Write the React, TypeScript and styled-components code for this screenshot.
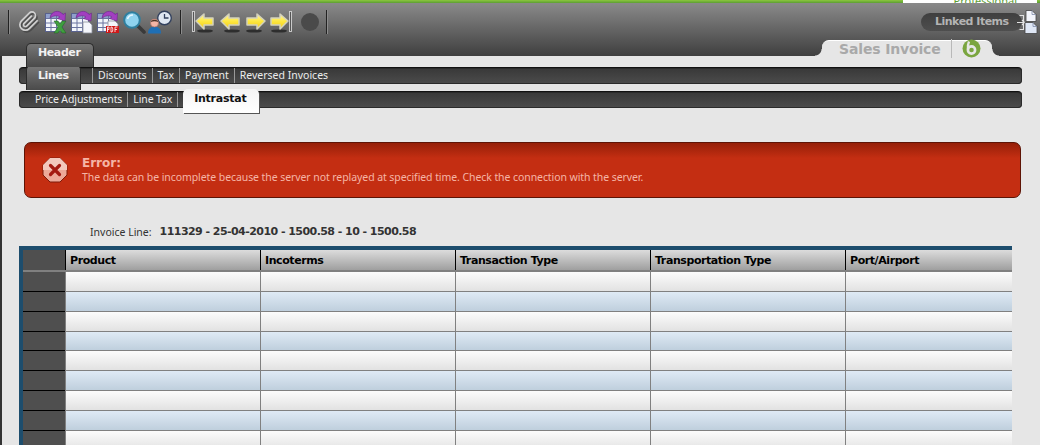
import * as React from 'react';
import styled, { createGlobalStyle } from 'styled-components';

const GlobalStyle = createGlobalStyle`
  html, body {
    margin: 0;
    height: 445px;
    overflow: hidden;
    background: #e6e6e6;
    font-family: "Noto Sans", "DejaVu Sans", sans-serif;
    font-size: 10.5px;
  }
`;

const BOLD = `"DejaVu Sans", Verdana, sans-serif`;

const Page = styled.div`
  width: 1040px;
  height: 445px;
  overflow: hidden;
  display: flex;
  flex-direction: column;
`;

const TopStrip = styled.div`
  height: 3px;
  flex: none;
  display: flex;
  justify-content: flex-end;
  background: linear-gradient(#8cc63f, #5c9e33);
`;

const Edition = styled.div`
  width: 134px;
  margin-right: 3px;
  background: #fff;
  color: #5c9e33;
  text-align: right;
  padding-right: 20px;
  box-sizing: border-box;
  line-height: 1px;
  font-size: 11px;
  overflow: hidden;
`;

const Toolbar = styled.div`
  height: 53px;
  flex: none;
  display: flex;
  flex-direction: column;
  justify-content: space-between;
  background: linear-gradient(#8a8a8a, #3f3f3f);
`;

const ToolRow = styled.div`
  display: flex;
  align-items: flex-start;
  justify-content: space-between;
  padding-top: 7px;
`;

const ToolGroup = styled.div`
  display: flex;
  align-items: center;
  height: 24px;
  padding-left: 8px;
`;

const ToolSep = styled.span<{ $l: number; $r: number }>`
  width: 1px;
  height: 24px;
  background: #222;
  box-shadow: 1px 0 0 #8d8d8d;
  margin: 0 ${(p) => p.$r}px 0 ${(p) => p.$l}px;
`;

const IconSlot = styled.span<{ $w: number; $gap?: number }>`
  display: flex;
  width: ${(p) => p.$w}px;
  height: 24px;
  margin-right: ${(p) => p.$gap ?? 3}px;
  svg {
    display: block;
  }
`;

const RecordDot = styled.span`
  width: 18px;
  height: 18px;
  border-radius: 50%;
  background: #4a4a4a;
  margin: 0 7px 0 9px;
`;

const LinkedWrap = styled.div`
  display: flex;
  align-items: center;
  margin-right: 2px;
`;

const LinkedPill = styled.div`
  width: 101px;
  height: 18px;
  margin-right: -6px;
  padding-left: 14px;
  box-sizing: border-box;
  border-radius: 9px;
  background: linear-gradient(#3f3f3f, #4e4e4e);
  color: #b4b4b4;
  font: bold 11px/18px ${BOLD};
  letter-spacing: -0.5px;
`;

const TitleRow = styled.div`
  display: flex;
  align-items: flex-end;
  justify-content: space-between;
  height: 16px;
  padding: 0 48px 0 26px;
`;

const HeaderTab = styled.div`
  position: relative;
  z-index: 1;
  width: 68px;
  height: 24px;
  margin-bottom: -11px;
  padding-left: 11px;
  box-sizing: border-box;
  border: 1px solid #2c2c2c;
  border-bottom: 0;
  border-radius: 5px 5px 0 0;
  background: linear-gradient(#777, #4a4a4a);
  color: #f2f2f2;
  font: bold 11px/17px ${BOLD};
  letter-spacing: -0.4px;
`;

const DocTab = styled.div`
  position: relative;
  width: 170px;
  height: 16px;
  display: flex;
  align-items: center;
  box-sizing: border-box;
  padding-left: 17px;
  background: #e6e6e6;
  border-top: 1px solid #fff;
  border-radius: 7px 7px 0 0;
  color: #a9a9a9;
  font: bold 14px/16px ${BOLD};
  letter-spacing: -0.15px;
  white-space: nowrap;
  &::before,
  &::after {
    content: '';
    position: absolute;
    bottom: 0;
    width: 7px;
    height: 7px;
  }
  &::before {
    left: -7px;
    background: radial-gradient(circle at 0 0, transparent 6px, #e6e6e6 7px);
  }
  &::after {
    right: -7px;
    background: radial-gradient(circle at 100% 0, transparent 6px, #e6e6e6 7px);
  }
`;

const DocDivider = styled.span`
  width: 1px;
  height: 19px;
  margin: 0 10px;
  flex: none;
  background: #b9b9b9;
`;

const Content = styled.div`
  flex: 1;
  min-height: 0;
  border-left: 2px solid #333;
  padding: 11px 18px 0 17px;
`;

const SubBar = styled.div<{ $mb: number; $track: number }>`
  height: 17px;
  margin-bottom: ${(p) => p.$mb}px;
  display: flex;
  align-items: flex-start;
  box-sizing: border-box;
  border-top: 1px solid #111;
  border-radius: 4px;
  background: linear-gradient(#383838, #4c4c4c);
  color: #ececec;
  letter-spacing: ${(p) => p.$track}px;
  box-shadow: inset 0 0 0 1px #2b2b2b;
`;

const BarItem = styled.span<{ $sep?: boolean; $lead?: boolean }>`
  height: 15px;
  line-height: 14px;
  padding: 0 5px;
  white-space: nowrap;
  border-right: ${(p) => (p.$sep === false ? 0 : '1px solid #999')};
  border-left: ${(p) => (p.$lead ? '1px solid #999' : 0)};
`;

const LinesTab = styled.div`
  width: 55px;
  height: 25px;
  margin: -3px 11px 0 7px;
  padding-left: 11px;
  flex: none;
  box-sizing: border-box;
  border: 1px solid #2c2c2c;
  border-bottom: 0;
  border-radius: 5px 5px 0 0;
  background: linear-gradient(#777, #4a4a4a);
  color: #f2f2f2;
  font: bold 11px/19px ${BOLD};
  letter-spacing: -0.4px;
`;

const ActiveTab = styled.div`
  width: 76px;
  height: 24px;
  margin: -3px 0 0 5px;
  flex: none;
  box-sizing: border-box;
  padding-left: 11px;
  border-radius: 5px 5px 0 0;
  background: linear-gradient(#f4f4f4, #fff);
  box-shadow: 1px 1px 0 #555;
  color: #111;
  font: bold 11px/20px ${BOLD};
  letter-spacing: -0.25px;
`;

const BarIndent = styled.span<{ $w: number }>`
  width: ${(p) => p.$w}px;
  flex: none;
`;

const ErrorBox = styled.div`
  height: 56px;
  margin: 34px 1px 0 5px;
  display: flex;
  align-items: center;
  box-sizing: border-box;
  padding-left: 17px;
  border: 1px solid #5e1406;
  border-radius: 7px;
  background: linear-gradient(#951f08, #c42e12 28%, #c42e12);
`;

const ErrorText = styled.div`
  margin-left: 14px;
  color: #f5b5a6;
`;

const ErrorTitle = styled.div`
  font: bold 12px/14px ${BOLD};
`;

const ErrorMessage = styled.div`
  line-height: 14px;
  letter-spacing: -0.08px;
`;

const InvoiceLine = styled.div`
  margin: 27px 0 0 71px;
  height: 14px;
  display: flex;
  color: #333;
  line-height: 14px;
`;

const InvoiceValue = styled.span`
  margin-left: 8px;
  font: bold 11px/14px ${BOLD};
  letter-spacing: -0.55px;
`;

const Grid = styled.div`
  width: 993px;
  margin-top: 7px;
  box-sizing: border-box;
  border-top: 4px solid #1d4d6d;
  border-left: 4px solid #1d4d6d;
`;

const HeadRow = styled.div`
  display: flex;
  height: 22px;
  box-sizing: border-box;
  border-bottom: 2px solid;
  border-image: linear-gradient(#000 50%, #808080 50%) 1;
`;

const Corner = styled.div`
  width: 42px;
  flex: none;
  background: #4f4f4f;
`;

const HeadCell = styled.div`
  width: 195px;
  flex: none;
  box-sizing: border-box;
  padding-left: 4px;
  border-left: 1px solid #000;
  background: linear-gradient(#dcdcdc, #9f9f9f);
  color: #000;
  font: bold 11px/22px ${BOLD};
  letter-spacing: -0.42px;
  &:last-child {
    width: 167px;
  }
`;

const Row = styled.div<{ $h: number }>`
  display: flex;
  height: ${(p) => p.$h}px;
`;

const RowHead = styled.div`
  width: 42px;
  flex: none;
  box-sizing: border-box;
  background: #4f4f4f;
  border-bottom: 1px solid #000;
`;

const Cell = styled.div<{ $alt: boolean }>`
  width: 195px;
  flex: none;
  box-sizing: border-box;
  border-left: 1px solid #808080;
  border-bottom: 1px solid #808080;
  background: ${(p) =>
    p.$alt ? 'linear-gradient(#dfeaf5, #bfcfdd)' : 'linear-gradient(#fcfcfc, #e2e2e2)'};
  &:last-child {
    width: 167px;
  }
`;

const CLIP_PATH =
  'm21.44 11.05-9.19 9.19a6 6 0 0 1-8.49-8.49l8.57-8.57A4 4 0 1 1 18 8.84l-8.59 8.57a2 2 0 0 1-2.83-2.83l8.49-8.48';

const Clip = () => (
  <svg width="22" height="24" viewBox="0 0 24 26" fill="none">
    <path d={CLIP_PATH} stroke="#4a4a4a" strokeWidth="1.6" transform="translate(1.5 2)" />
    <path d={CLIP_PATH} stroke="#d2d2d2" strokeWidth="1.8" />
  </svg>
);

const Sheet = ({ children }: { children?: React.ReactNode }) => (
  <svg width="23" height="24" viewBox="0 0 23 24" fill="none">
    <rect x="0.5" y="3.5" width="17" height="18" fill="#f2f5fb" stroke="#59628e" />
    <rect x="1" y="4" width="16" height="4" fill="#8fa0cc" />
    <path d="M1 8.500h16M1 13h16M1 17.500h16M6 4v17M11.500 4v17" stroke="#6a74a0" />
    <path d="M5 8C6 1 14-1 18 4.500l2.500-1.500-.5 8-7.500-2.500 2.500-1.500C12 5 8.500 5.500 5 8Z" fill="#a23fc0" stroke="#6b2a86" strokeWidth=".6" />
    {children}
  </svg>
);

const SearchGlass = () => (
  <svg width="23" height="24" viewBox="0 0 23 24" fill="none">
    <path d="m15 16 6 6" stroke="#3a3a3a" strokeWidth="3.600" strokeLinecap="round" />
    <circle cx="9" cy="10" r="7.800" fill="#8fd3ef" stroke="#2f7f9f" strokeWidth="2" />
    <path d="M4.500 9c1-3 3-4 5.500-4" stroke="#e6f8ff" strokeWidth="1.600" />
  </svg>
);

const UserClock = () => (
  <svg width="24" height="24" viewBox="0 0 24 24" fill="none">
    <circle cx="16.500" cy="8" r="6.800" fill="#dfe7f2" stroke="#33415e" strokeWidth="1.400" />
    <path d="M16.500 4v4h4" stroke="#33415e" strokeWidth="1.300" />
    <path d="M0 23.500c0-5 3-7 6.500-7s6.500 2 6.500 7Z" fill="#1f6fb5" />
    <circle cx="6.500" cy="13" r="4" fill="#f4b5a6" stroke="#a86a5c" strokeWidth=".6" />
    <path d="M2.800 12c.7-3 6.700-3 7.400 0-2.400-1-5-1-7.400 0Z" fill="#4a3328" />
  </svg>
);

const Arrow = ({ flip, stop }: { flip?: boolean; stop?: boolean }) => {
  const id = `${flip ? 'r' : 'l'}${stop ? 's' : 'n'}`;
  return (
    <svg width="22" height="24" viewBox="0 0 22 24" fill="none">
      <defs>
        <linearGradient id={id} x1="0" y1="0" x2="0" y2="1">
          <stop offset="0" stopColor="#fff6a0" />
          <stop offset="0.5" stopColor="#fde73e" />
          <stop offset="1" stopColor="#f0c818" />
        </linearGradient>
      </defs>
      <g transform={flip ? 'matrix(-1 0 0 1 22 0)' : undefined}>
        <ellipse cx="13" cy="21" rx="8" ry="1.600" fill="#2e2e2e" />
        {stop && <rect x="0.500" y="1.500" width="2" height="20" fill="#555" stroke="#d4d4d4" strokeWidth=".9" />}
        <path
          d={stop ? 'M4 11l8-7v4h9v7h-9v4Z' : 'M2 11l8-7v4h10v7H10v4Z'}
          fill={`url(#${id})`}
          stroke="#d4d2bc"
          strokeWidth="1.500"
          strokeLinejoin="round"
        />
      </g>
    </svg>
  );
};

const LinkedIcon = () => (
  <svg width="22" height="24" viewBox="0 0 22 24" fill="none">
    <path d="M3.500 5.500h4v14h-4M1 12.500h7M6 10l2.500 2.500L6 15" stroke="#e2e2e2" strokeWidth="1.100" />
    <path d="M10 .5h6l4 4v7H10Z" fill="#f3f5fb" stroke="#444" strokeWidth=".8" />
    <path d="M9 12.500h8l4 4v7H9Z" fill="#dfe7f5" stroke="#444" strokeWidth=".8" />
    <path d="M16 .5v4h4M17 12.500v4h4" stroke="#7f8ba8" strokeWidth=".8" />
  </svg>
);

const Logo = () => (
  <svg width="19" height="19" viewBox="0 0 19 19" fill="none" style={{ flex: 'none' }}>
    <circle cx="9.500" cy="9.500" r="9" fill="#7aa53f" />
    <circle cx="9.500" cy="11" r="3.600" fill="none" stroke="#e6e6e6" strokeWidth="2.600" />
    <path d="M7 2.500c-1 2-1.200 5-1 8" stroke="#e6e6e6" strokeWidth="2.400" />
    <circle cx="9.500" cy="11" r="1.500" fill="#7aa53f" />
  </svg>
);

const ErrorIcon = () => (
  <svg width="26" height="26" viewBox="0 0 26 26" fill="none" style={{ flex: 'none' }}>
    <path d="M8 1h10l7 7v10l-7 7H8l-7-7V8Z" fill="#eda99a" stroke="#7c1a0a" />
    <path d="M8 1h10l7 7v5H1V8Z" fill="#f3c8bd" />
    <path d="m8.500 8.500 9 9m0-9-9 9" stroke="#a41a12" strokeWidth="3.200" strokeLinecap="round" />
  </svg>
);

const columns = ['Product', 'Incoterms', 'Transaction Type', 'Transportation Type', 'Port/Airport'];
const rowHeights = [20, 20, 20, 19, 20, 20, 20, 20, 20];

export default function App() {
  return (
    <Page>
      <GlobalStyle />
      <TopStrip>
        <Edition>Professional</Edition>
      </TopStrip>
      <Toolbar>
        <ToolRow>
          <ToolGroup>
            <ToolSep $l={0} $r={9} />
            <IconSlot $w={22} $gap={5}><Clip /></IconSlot>
            <IconSlot $w={23}>
              <Sheet>
                <path d="M9 11h4l2 3 2-3h4l-4 6 4 6h-4l-2-3-2 3H9l4-6Z" fill="#3f9f3f" stroke="#1e5e1e" strokeWidth=".5" />
              </Sheet>
            </IconSlot>
            <IconSlot $w={23}>
              <Sheet>
                <path d="M12 12h6l3 3v8h-9Z" fill="#f4f6fb" stroke="#8a8f9d" strokeWidth=".8" />
              </Sheet>
            </IconSlot>
            <IconSlot $w={23}>
              <Sheet>
                <path d="M11 11h7l3 3v3H11Z" fill="#f4f6fb" stroke="#8a8f9d" strokeWidth=".8" />
                <rect x="9" y="16" width="13" height="7" fill="#d01818" />
                <path d="M10.500 22v-5h1.500v2.500h-1.500M14 17v5h1c1 0 1-5 0-5ZM18 22v-5h2.500M18 19.500h2" stroke="#fff" strokeWidth=".8" />
              </Sheet>
            </IconSlot>
            <IconSlot $w={23} $gap={2}><SearchGlass /></IconSlot>
            <IconSlot $w={24} $gap={8}><UserClock /></IconSlot>
            <ToolSep $l={0} $r={11} />
            <IconSlot $w={22} $gap={5}><Arrow stop /></IconSlot>
            <IconSlot $w={22} $gap={4}><Arrow /></IconSlot>
            <IconSlot $w={22} $gap={3}><Arrow flip /></IconSlot>
            <IconSlot $w={22} $gap={0}><Arrow flip stop /></IconSlot>
            <RecordDot />
            <ToolSep $l={0} $r={0} />
          </ToolGroup>
          <LinkedWrap>
            <LinkedPill>Linked Items</LinkedPill>
            <IconSlot $w={22} $gap={0}><LinkedIcon /></IconSlot>
          </LinkedWrap>
        </ToolRow>
        <TitleRow>
          <HeaderTab>Header</HeaderTab>
          <DocTab>
            Sales Invoice
            <DocDivider />
            <Logo />
          </DocTab>
        </TitleRow>
      </Toolbar>
      <Content>
        <SubBar $mb={7} $track={0}>
          <LinesTab>Lines</LinesTab>
          <BarItem $lead>Discounts</BarItem>
          <BarItem>Tax</BarItem>
          <BarItem>Payment</BarItem>
          <BarItem $sep={false}>Reversed Invoices</BarItem>
        </SubBar>
        <SubBar $mb={0} $track={-0.12}>
          <BarIndent $w={11} />
          <BarItem>Price Adjustments</BarItem>
          <BarItem>Line Tax</BarItem>
          <ActiveTab>Intrastat</ActiveTab>
        </SubBar>
        <ErrorBox>
          <ErrorIcon />
          <ErrorText>
            <ErrorTitle>Error:</ErrorTitle>
            <ErrorMessage>
              The data can be incomplete because the server not replayed at specified time. Check the connection with the server.
            </ErrorMessage>
          </ErrorText>
        </ErrorBox>
        <InvoiceLine>
          Invoice Line:
          <InvoiceValue>111329 - 25-04-2010 - 1500.58 - 10 - 1500.58</InvoiceValue>
        </InvoiceLine>
        <Grid>
          <HeadRow>
            <Corner />
            {columns.map((c) => (
              <HeadCell key={c}>{c}</HeadCell>
            ))}
          </HeadRow>
          {rowHeights.map((h, i) => (
            <Row key={i} $h={h}>
              <RowHead />
              {columns.map((c) => (
                <Cell key={c} $alt={i % 2 === 1} />
              ))}
            </Row>
          ))}
        </Grid>
      </Content>
    </Page>
  );
}
